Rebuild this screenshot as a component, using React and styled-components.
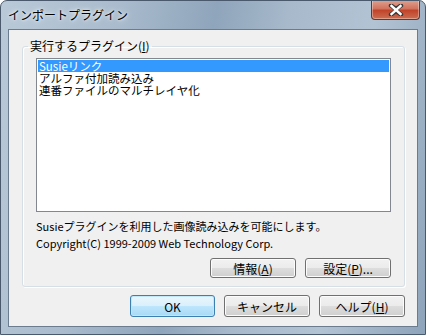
import React from "react";
import styled, { createGlobalStyle } from "styled-components";

const GlobalStyle = createGlobalStyle`
  html, body {
    margin: 0;
    padding: 0;
    background: #ffffff;
  }
  body {
    font-family: "Noto Sans CJK JP", "Noto Sans", sans-serif;
    font-size: 12px;
  }
`;

const Window = styled.div`
  box-sizing: border-box;
  width: 426px;
  height: 335px;
  display: flex;
  flex-direction: column;
  padding: 0 7px 7px 7px;
  border: 1px solid #4a5a6c;
  border-radius: 7px 7px 0 0;
  background: linear-gradient(
    100deg,
    #b9c9d8 0%,
    #a9bbcd 25%,
    #8fa5bb 45%,
    #a7b9cb 60%,
    #b2c3d4 78%,
    #8ea4ba 100%
  );
  overflow: hidden;
`;

const TitleBar = styled.div`
  height: 28px;
  display: flex;
  align-items: flex-start;
  justify-content: space-between;
  flex-shrink: 0;
`;

const Title = styled.span`
  margin-top: 6px;
  font-size: 12px;
  line-height: 16px;
  color: #000;
  text-shadow: 0 0 6px rgba(255, 255, 255, 0.9), 0 0 3px rgba(255, 255, 255, 0.9);
`;

const CloseButton = styled.div`
  margin-top: -1px;
  margin-right: -2px;
  width: 47px;
  height: 19px;
  display: flex;
  align-items: center;
  justify-content: center;
  border: 1px solid #5b3a37;
  border-top: none;
  border-radius: 0 0 4px 4px;
  background: linear-gradient(
    180deg,
    #e0a393 0%,
    #d1735e 45%,
    #c1442a 55%,
    #cc6d52 100%
  );
  box-shadow: inset 0 0 0 1px rgba(255, 255, 255, 0.35);
`;

const Client = styled.div`
  flex: 1;
  display: flex;
  flex-direction: column;
  background: #f0f0f0;
  border: 1px solid #6b7c8e;
  padding: 9px 12px 0 13px;
`;

const Group = styled.fieldset`
  margin: 0;
  padding: 5px 13px 0 13px;
  height: 248px;
  box-sizing: border-box;
  border: 1px solid #d5dfe5;
  border-radius: 3px;
  box-shadow: inset 1px 1px 0 #ffffff, 1px 1px 0 #ffffff;
  display: flex;
  flex-direction: column;
`;

const Legend = styled.legend`
  padding: 0 2px;
  margin-left: -8px;
  font-size: 12px;
  line-height: 14px;
  color: #000;
`;

const ListBox = styled.div`
  height: 154px;
  box-sizing: border-box;
  background: #ffffff;
  border: 1px solid #828790;
  padding: 1px;
  display: flex;
  flex-direction: column;
`;

const ListItem = styled.div`
  height: 12px;
  line-height: 12px;
  font-size: 11.5px;
  padding-left: 1px;
  color: ${(p) => (p.selected ? "#ffffff" : "#000000")};
  background: ${(p) => (p.selected ? "#3399ff" : "transparent")};
`;

const Info = styled.div`
  margin-top: 6px;
  font-size: 11px;
  line-height: 17px;
  color: #000;
`;

const ButtonRow = styled.div`
  display: flex;
  justify-content: flex-end;
  gap: ${(p) => p.gap || 9}px;
  margin-top: ${(p) => p.top || 0}px;
`;

const Button = styled.div`
  box-sizing: border-box;
  width: ${(p) => p.w || 86}px;
  height: ${(p) => p.h || 20}px;
  display: flex;
  align-items: center;
  justify-content: center;
  font-size: 12px;
  color: #000;
  border: 1px solid ${(p) => (p.primary ? "#3c7fb1" : "#707070")};
  border-radius: 3px;
  background: ${(p) =>
    p.primary
      ? "linear-gradient(180deg, #eaf6fd 0%, #d9f0fc 50%, #bee6fd 51%, #a7d9f5 100%)"
      : "linear-gradient(180deg, #f2f2f2 0%, #ebebeb 50%, #dddddd 51%, #cfcfcf 100%)"};
  box-shadow: inset 0 0 0 1px ${(p) => (p.primary ? "#c2e6fa" : "#fcfcfc")};
`;

const Key = styled.span`
  text-decoration: underline;
`;

const XIcon = () => (
  <svg width="16" height="12" viewBox="0 0 16 12">
    <path
      d="M3 1.5 L8 5 L13 1.5 M3 10.5 L8 7 L13 10.5"
      stroke="#3a3a3a"
      strokeWidth="4.4"
      fill="none"
      strokeLinecap="round"
      strokeLinejoin="round"
    />
    <path
      d="M3.5 2 L12.5 10 M12.5 2 L3.5 10"
      stroke="#ffffff"
      strokeWidth="2.4"
      fill="none"
      strokeLinecap="square"
    />
  </svg>
);

const plugins = ["Susieリンク", "アルファ付加読み込み", "連番ファイルのマルチレイヤ化"];

const App = () => {
  return (
    <>
      <GlobalStyle />
      <Window>
        <TitleBar>
          <Title>インポートプラグイン</Title>
          <CloseButton>
            <XIcon />
          </CloseButton>
        </TitleBar>
        <Client>
          <Group>
            <Legend>
              実行するプラグイン(<Key>I</Key>)
            </Legend>
            <ListBox>
              {plugins.map((name, i) => (
                <ListItem key={name} selected={i === 0}>
                  {name}
                </ListItem>
              ))}
            </ListBox>
            <Info>
              Susieプラグインを利用した画像読み込みを可能にします。
              <br />
              Copyright(C) 1999-2009 Web Technology Corp.
            </Info>
            <ButtonRow top={6} gap={9}>
              <Button>
                情報(<Key>A</Key>)
              </Button>
              <Button>
                設定(<Key>P</Key>)...
              </Button>
            </ButtonRow>
          </Group>
          <ButtonRow top={8} gap={9}>
            <Button primary w={85} h={22}>
              OK
            </Button>
            <Button w={86} h={22}>
              キャンセル
            </Button>
            <Button w={86} h={22}>
              ヘルプ(<Key>H</Key>)
            </Button>
          </ButtonRow>
        </Client>
      </Window>
    </>
  );
};

export default App;
